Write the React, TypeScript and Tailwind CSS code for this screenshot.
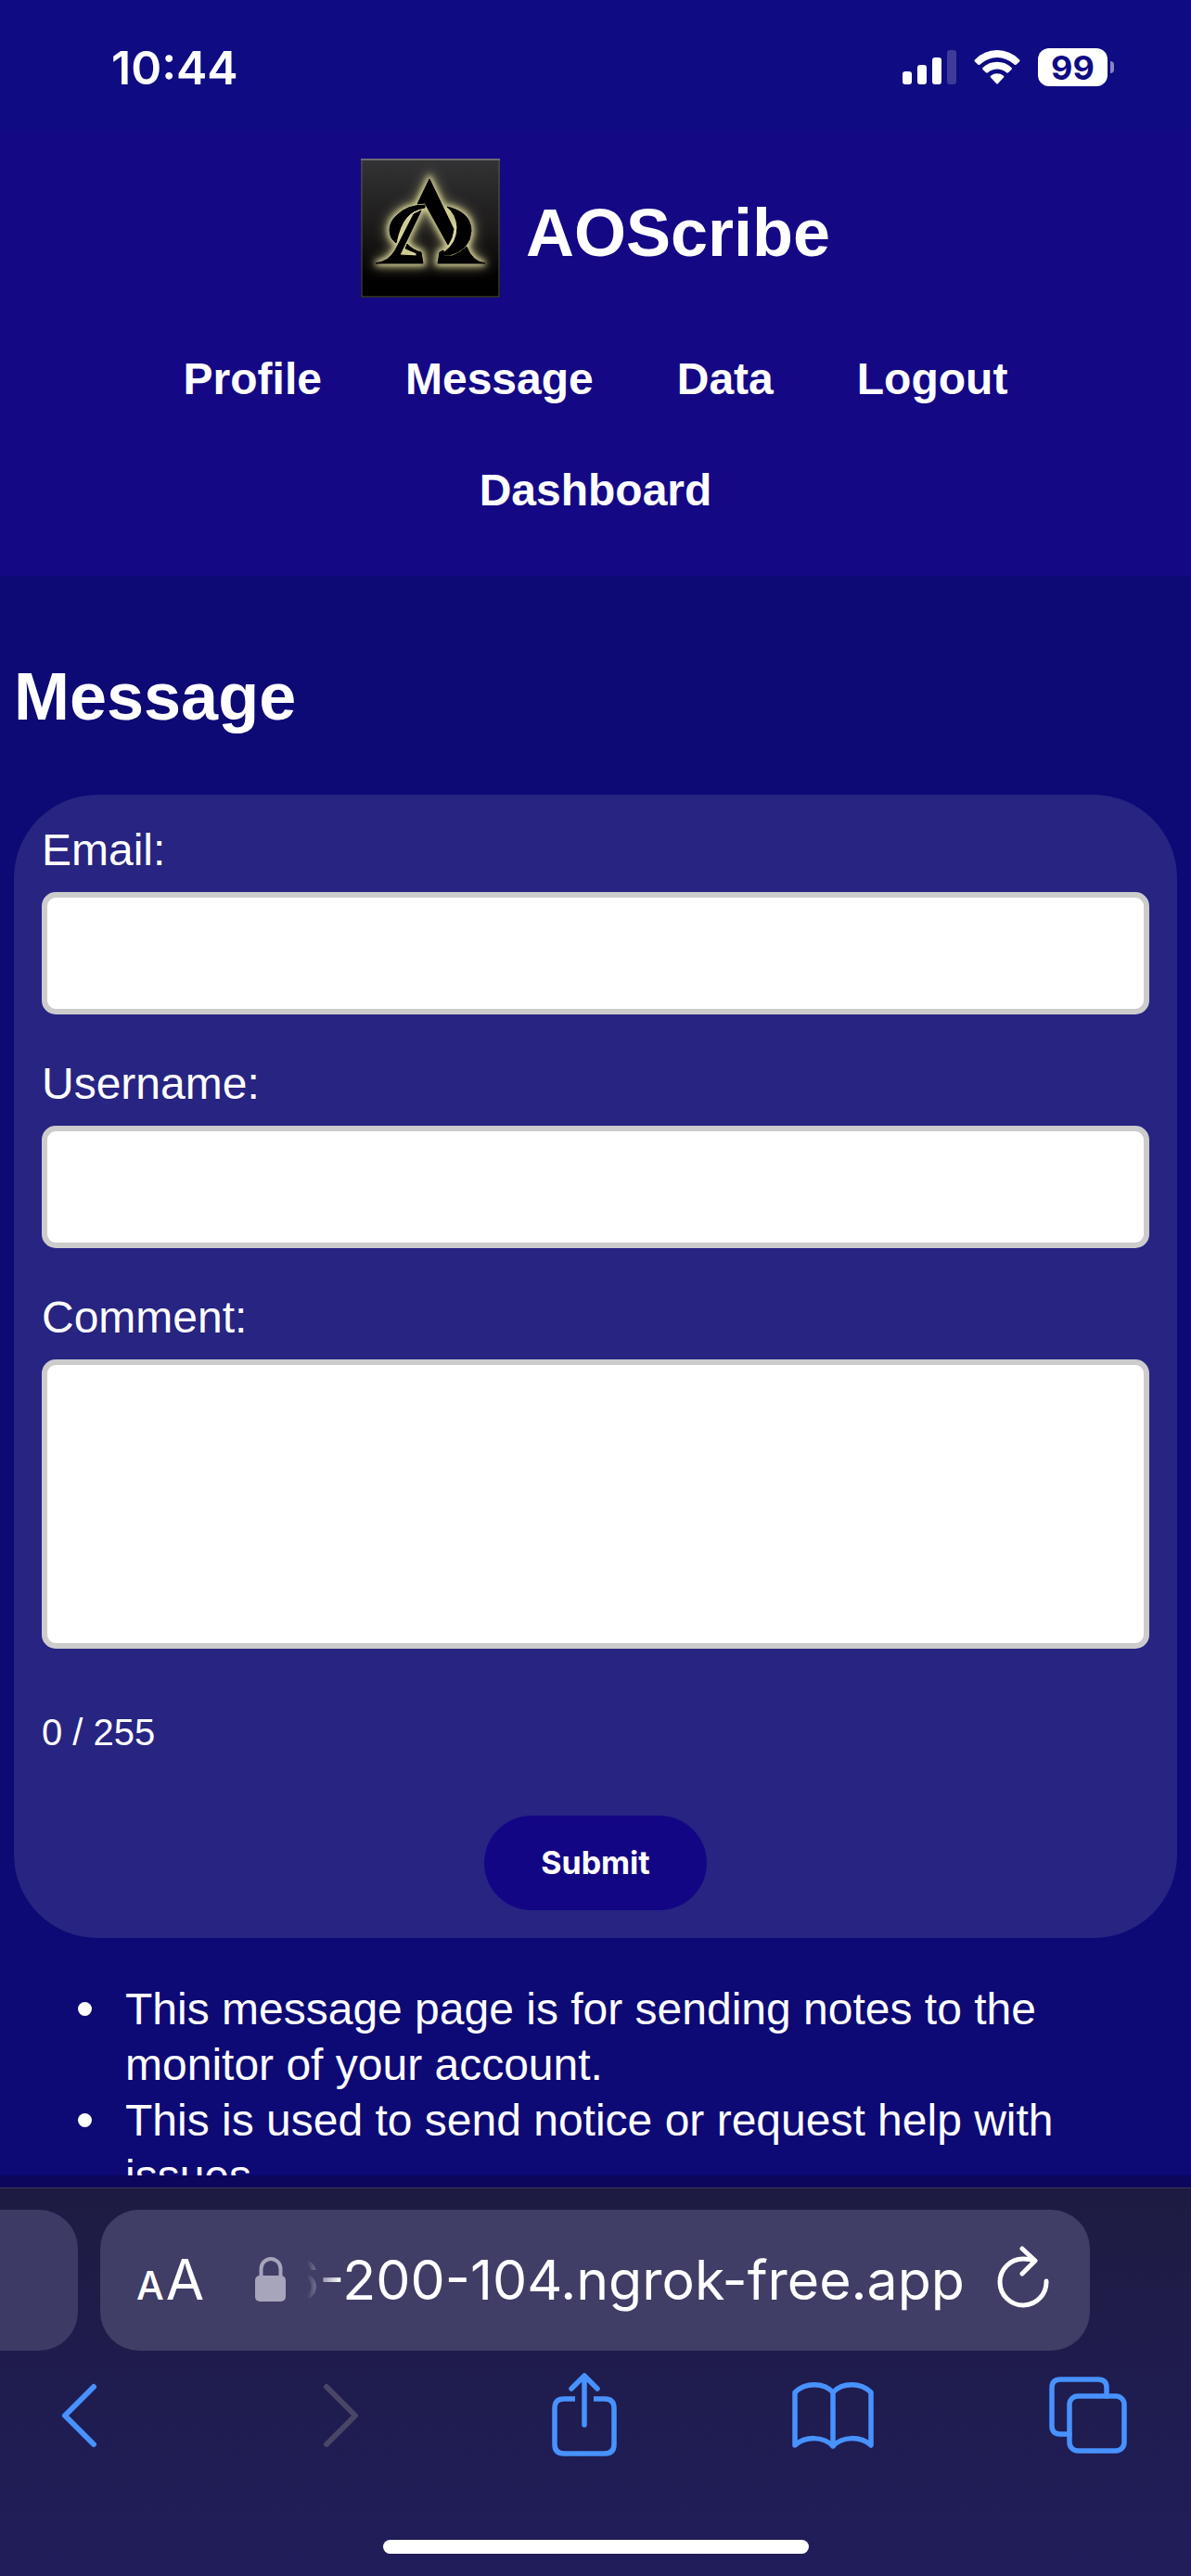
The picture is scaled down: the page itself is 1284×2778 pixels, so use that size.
import { useState } from "react";

const inter = "font-['Inter',sans-serif]";

function Logo() {
  return (
    <svg viewBox="0 0 150 150" className="size-[150px] shrink-0" role="img" aria-label="AOScribe logo">
      <defs>
        <linearGradient id="plate" x1="0" y1="0" x2="0" y2="1">
          <stop offset="0" stopColor="#333335" />
          <stop offset="0.55" stopColor="#1a1817" />
          <stop offset="0.85" stopColor="#030202" />
          <stop offset="1" stopColor="#000" />
        </linearGradient>
        <filter id="glow" x="-30%" y="-30%" width="160%" height="160%">
          <feGaussianBlur stdDeviation="3" />
        </filter>
        <filter id="halo" x="-40%" y="-40%" width="180%" height="180%">
          <feGaussianBlur stdDeviation="7" />
        </filter>
        <g id="mark">
          <path d="M74 22 L100 76 Q99 86 94 93 L69 48 L61 49 Z" />
          <path d="M65 56 L42 104 L60 105 L60 102 L48 97 L50 92 Q56 99 65 101 L67 113 L16 113 Q30 111 37 99 L57 60 Z" />
          <path d="M69 50 Q50 50 39 61 Q31 68 31 77 Q31 86 38 91 Q42 72 49 64 Q56 55 69 53 Z" />
          <path d="M93 52 Q119 58 119 78 Q118 98 96 104 L90 104 L90 101 Q104 91 104 74 Q103 60 93 52 Z" />
          <path d="M85 101 L89 99 L90 105 L98 105 Q107 102 114 95 Q120 111 134 113 L83 113 Z" />
        </g>
      </defs>
      <rect width="150" height="150" fill="url(#plate)" />
      <rect x="1" y="1" width="148" height="148" fill="none" stroke="#555" strokeWidth="1" />
      <rect width="150" height="2" fill="#6a6a72" />
      <use href="#mark" fill="#b5b27c" stroke="#b5b27c" strokeWidth="8" opacity="0.6" filter="url(#halo)" />
      <use href="#mark" fill="#d9d79c" stroke="#d9d79c" strokeWidth="5" filter="url(#glow)" />
      <use href="#mark" fill="#000" stroke="#000" strokeWidth="1" />
    </svg>
  );
}

function StatusBar() {
  return (
    <div className={`flex h-[141px] shrink-0 items-center justify-between bg-[#0f0b82] pl-[120px] pr-[83px] pt-1 ${inter}`}>
      <time className="text-[50px] font-semibold leading-[60px]">10:44</time>
      <div className="flex items-center gap-[19px]">
        <svg viewBox="0 0 58 38" className="h-[38px] w-[58px]" fill="#fff" aria-hidden="true">
          <rect x="0" y="23" width="10" height="14" rx="3" />
          <rect x="16" y="16" width="10" height="21" rx="3" />
          <rect x="32" y="8" width="10" height="29" rx="3" />
          <rect x="48" y="0" width="10" height="37" rx="3" opacity="0.2" />
        </svg>
        <svg viewBox="0 0 50 38" className="h-[38px] w-[50px]" fill="#fff" aria-hidden="true">
          <path d="M0.800 10.500 Q11 0 25 0 Q39 0 49.200 10.500 Q50 11.500 49 12.500 L45.500 15.800 Q44.500 16.500 43.500 15.500 Q35 8 25 8 Q15 8 6.500 15.500 Q5.500 16.500 4.500 15.800 L1 12.500 Q0 11.500 0.800 10.500 Z" />
          <path d="M9.500 19 Q16 12.700 25 12.700 Q34 12.700 40.500 19 Q41.500 20 40.500 21 L37 24.300 Q36 25 35 24.200 Q30.500 20.500 25 20.500 Q19.500 20.500 15 24.200 Q14 25 13 24.300 L9.500 21 Q8.500 20 9.500 19 Z" />
          <path d="M18 27.700 Q25 22.800 32 27.700 Q33 28.600 32 29.600 L26 36 Q25 37 24 36 L18 29.600 Q17 28.600 18 27.700 Z" />
        </svg>
        <div className="flex items-center gap-[3px]">
          <span className="flex h-[41px] w-[75px] items-center justify-center rounded-[12px] bg-white text-[36px] font-bold leading-[40px] text-[#0f0b82]">
            99
          </span>
          <span className="h-[13px] w-[4px] rounded-r-full bg-white/50" />
        </div>
      </div>
    </div>
  );
}

function Header() {
  const links = ["Profile", "Message", "Data", "Logout", "Dashboard"];
  return (
    <header className="bg-[#140885] pb-8 pt-[30px]">
      <div className="flex items-center justify-center gap-7">
        <Logo />
        <p className="pt-[10px] text-[72px] font-bold leading-[84px]">AOScribe</p>
      </div>
      <nav className="mx-auto mt-[28px] flex max-w-[1000px] flex-wrap justify-center gap-x-[90px]">
        {links.map((l) => (
          <a key={l} href={`#${l.toLowerCase()}`} className="py-[30px] text-[48px] font-bold leading-[60px]">
            {l}
          </a>
        ))}
      </nav>
    </header>
  );
}

const field = "mt-[15px] block w-full rounded-[15px] border-6 border-[#ccc] bg-white p-6 text-[48px] text-black outline-none";

function MessageForm() {
  const [comment, setComment] = useState("");
  return (
    <form
      className="rounded-[90px] bg-[#272482] px-[30px] pb-[30px] pt-[30px] text-[48px] leading-[60px]"
      onSubmit={(e) => e.preventDefault()}
    >
      <label htmlFor="email" className="block">Email:</label>
      <input id="email" type="email" className={`${field} h-[132px]`} />
      <label htmlFor="username" className="mt-[45px] block">Username:</label>
      <input id="username" type="text" className={`${field} h-[132px]`} />
      <label htmlFor="comment" className="mt-[45px] block">Comment:</label>
      <textarea
        id="comment"
        maxLength={255}
        value={comment}
        onChange={(e) => setComment(e.target.value)}
        className={`${field} h-[312px] resize-none`}
      />
      <p className="mt-[60px] text-[40px]">{comment.length} / 255</p>
      <button
        type="submit"
        className={`mx-auto mt-[60px] block h-[102px] rounded-[51px] bg-[#130685] px-[61px] text-[34px] font-bold leading-[40px] ${inter}`}
      >
        Submit
      </button>
    </form>
  );
}

function Notes() {
  const notes = [
    "This message page is for sending notes to the monitor of your account.",
    "This is used to send notice or request help with issues.",
  ];
  return (
    <ul className="mt-[47px] pl-[69px] pr-[90px] text-[48px] leading-[60px]">
      {notes.map((note) => (
        <li key={note} className="flex gap-9 before:mt-[22px] before:size-[15px] before:shrink-0 before:rounded-full before:bg-white">
          <span>{note}</span>
        </li>
      ))}
    </ul>
  );
}

function BrowserBar() {
  const icon = "fill-none stroke-[#4792ff] [stroke-linecap:round] [stroke-linejoin:round]";
  return (
    <footer className="shrink-0 border-t border-[#3d3c55] bg-linear-to-b from-[#1e1b42] to-[#201d5b] pt-[23px]">
      <div className="flex items-stretch gap-6 pr-[109px]">
        <div className="h-[152px] w-[84px] rounded-r-[42px] bg-[#3d3a66]" />
        <div className={`flex h-[152px] grow items-center rounded-[42px] bg-[#403d66] pl-[39px] pr-[44px] ${inter}`}>
          <button type="button" aria-label="Page settings" className="flex items-baseline gap-[2px] pt-1 leading-[60px]">
            <span className="text-[42px] font-medium">A</span>
            <span className="text-[60px]">A</span>
          </button>
          <svg viewBox="0 0 34 50" className="ml-[55px] h-[50px] w-[34px]" aria-hidden="true">
            <path d="M6.500 22 V13 A10.500 11 0 0 1 27.500 13 V22" fill="none" stroke="#a6a5bb" strokeWidth="4" />
            <rect y="20" width="33" height="28" rx="5" fill="#a6a5bb" />
          </svg>
          <div className="ml-[22px] flex h-[76px] w-0 grow justify-end overflow-hidden text-[59px] leading-[76px] [mask-image:linear-gradient(to_right,transparent,#000_36px)]">
            <span className="whitespace-nowrap">6-200-104.ngrok-free.app</span>
          </div>
          <button type="button" aria-label="Reload" className="mb-[6px] ml-[35px]">
            <svg viewBox="0 0 56 68" className="h-[68px] w-[56px] fill-none stroke-white stroke-5 [stroke-linecap:round] [stroke-linejoin:round]">
              <path d="M53 38 A25 25 0 1 1 28 14 Q35 14 41 16 M27 3 L41 16 L27 30" />
            </svg>
          </button>
        </div>
      </div>
      <div className="mt-[24px] flex h-[92px] items-center justify-between pl-[66px] pr-[69px]">
        <button type="button" aria-label="Back" className="w-[75px]">
          <svg viewBox="0 0 40 70" className={`h-[70px] w-[40px] stroke-6 ${icon}`}><path d="M35 4 L4 35 L35 66" /></svg>
        </button>
        <button type="button" aria-label="Forward" disabled className="flex w-[75px] justify-center">
          <svg viewBox="0 0 40 70" className="h-[70px] w-[40px] fill-none stroke-[#494566] stroke-6 [stroke-linecap:round] [stroke-linejoin:round]"><path d="M4 4 L35 35 L4 66" /></svg>
        </button>
        <button type="button" aria-label="Share">
          <svg viewBox="0 0 70 92" className={`h-[92px] w-[70px] stroke-[5.5] ${icon}`}>
            <path d="M35 4 V56 M21 17 L35 3 L49 17" />
            <path className="[stroke-linecap:butt]" d="M25 28 H13 Q3 28 3 38 V77 Q3 87 13 87 H57 Q67 87 67 77 V38 Q67 28 57 28 H45" />
          </svg>
        </button>
        <button type="button" aria-label="Bookmarks">
          <svg viewBox="0 0 88 74" className={`h-[74px] w-[88px] stroke-[5.5] ${icon}`}>
            <path d="M44 12 C34 1 14 1 3 12 V69 C14 59 34 59 44 70 C54 59 74 59 85 69 V12 C74 1 54 1 44 12 V70" />
          </svg>
        </button>
        <button type="button" aria-label="Tabs">
          <svg viewBox="0 0 84 84" className={`h-[84px] w-[84px] stroke-[5.5] ${icon}`}>
            <rect x="22" y="21" width="59" height="59" rx="9" />
            <path d="M22 62 H12 Q3 62 3 53 V12 Q3 3 12 3 H53 Q62 3 62 12 V21" />
          </svg>
        </button>
      </div>
      <div className="mx-auto mb-6 mt-[88px] h-[15px] w-[459px] rounded-full bg-white" />
    </footer>
  );
}

export default function App() {
  return (
    <div className="flex h-screen flex-col bg-[#0d0975] font-['Liberation_Sans',Arial,sans-serif] text-white">
      <StatusBar />
      <div className="min-h-0 grow overflow-hidden">
        <Header />
        <main className="px-[15px]">
          <h1 className="pb-16 pt-[88px] text-[72px] font-bold leading-[84px]">Message</h1>
          <MessageForm />
          <Notes />
        </main>
      </div>
      <div className="h-[13px] shrink-0 bg-[#0c065c]" />
      <BrowserBar />
    </div>
  );
}
